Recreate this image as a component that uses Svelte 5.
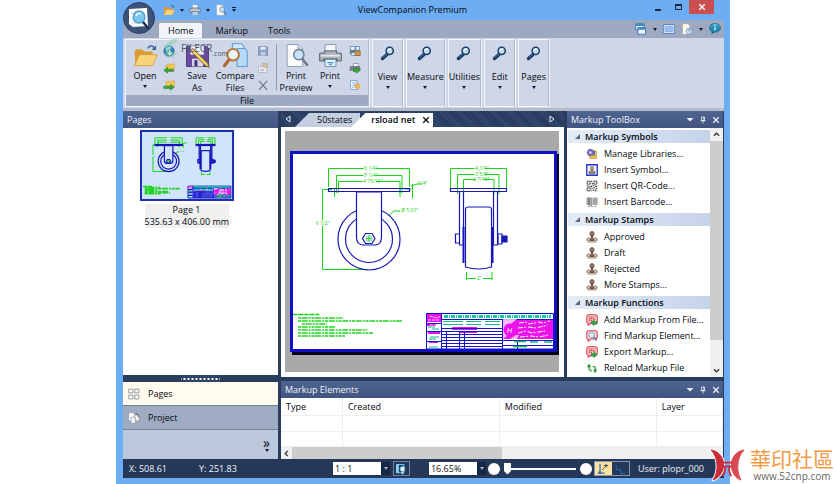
<script lang="ts">
  type Tool = { icon: string; label: string }

  const ribbonTabs = ['Home', 'Markup', 'Tools']
  const collapsedGroups = ['View', 'Measure', 'Utilities', 'Edit', 'Pages']

  const sections: { title: string; items: Tool[] }[] = [
    {
      title: 'Markup Symbols',
      items: [
        { icon: 'library', label: 'Manage Libraries...' },
        { icon: 'symbol', label: 'Insert Symbol...' },
        { icon: 'qr', label: 'Insert QR-Code...' },
        { icon: 'barcode', label: 'Insert Barcode...' },
      ],
    },
    {
      title: 'Markup Stamps',
      items: [
        { icon: 'stamp', label: 'Approved' },
        { icon: 'stamp', label: 'Draft' },
        { icon: 'stamp', label: 'Rejected' },
        { icon: 'stamp', label: 'More Stamps...' },
      ],
    },
    {
      title: 'Markup Functions',
      items: [
        { icon: 'markup-add', label: 'Add Markup From File...' },
        { icon: 'markup-find', label: 'Find Markup Element...' },
        { icon: 'markup-export', label: 'Export Markup...' },
        { icon: 'reload', label: 'Reload Markup File' },
      ],
    },
  ]

  const columns = ['Type', 'Created', 'Modified', 'Layer']

  let activeTab = $state('Home')
  let zoom = $state(0)
</script>

{#snippet icon(name: string)}
  <svg class="icon" viewBox="0 0 16 16" aria-hidden="true">
    {#if name === 'folder'}
      <path d="M1 5.500l1-1.500h4l1 1.500h5.500v3H4L1.500 14z" fill="#d99b35" />
      <path d="M4 7.500h11.500L12.500 14.500H1z" fill="#f9d27c" stroke="#d8992f" stroke-width=".5" />
      <path d="M9.500 3.500c1-2 3-2 4-.5" fill="none" stroke="#45618c" stroke-width="1" />
      <path d="M14.800 1.500v3h-3z" fill="#45618c" />
    {:else if name === 'printer'}
      <path d="M4.500 1h7v6h-7z" fill="#f7f9fc" stroke="#8693a5" stroke-width=".6" />
      <path d="M1 6.500h3V5h8v1.500h3v5H1z" fill="#a9b0ba" stroke="#59616d" stroke-width=".6" />
      <path d="M2 7.500h12v1.200H2z" fill="#e3e7ec" />
      <path d="M3.500 10h9v1.500h-9z" fill="#454c58" />
      <path d="M4.500 10.500h7V15h-7z" fill="#e6f4fc" stroke="#6e8aa5" stroke-width=".6" />
      <path d="M6 12.500h4M7 13.700h2" stroke="#469bd6" stroke-width=".8" />
    {:else if name === 'preview'}
      <path d="M2 1h7l3 3v11H2z" fill="#fbfcfe" stroke="#8b9bb1" stroke-width=".6" />
      <path d="M9 1v3h3" fill="#d8e1ec" stroke="#8b9bb1" stroke-width=".6" />
      <path d="M11.500 10l3.300 4" stroke="#6b7c93" stroke-width="1.600" stroke-linecap="round" />
      <circle cx="9.500" cy="7.500" r="3.300" fill="#c9e4f8" stroke="#66788f" stroke-width=".9" />
    {:else if name === 'save'}
      <path d="M1 2h12.500L15 3.500V15H1z" fill="#6b4ba0" stroke="#4a3477" stroke-width=".6" />
      <path d="M3.500 2h8.500v5.500H3.500z" fill="#eef0fa" />
      <path d="M4.500 10h7v5h-7z" fill="#d9d9ec" />
      <path d="M6 11h2v4H6z" fill="#4a3477" />
      <path d="M5 3.500l9.500 9.500 1 2.500-2.500-1L3.500 5z" fill="#f5d45f" stroke="#6e5523" stroke-width=".6" />
    {:else if name === 'compare'}
      <path d="M6 .5h6l1.500 2V11H6z" fill="#d2e8fa" stroke="#5c9fd8" stroke-width=".7" />
      <path d="M9 3.500h5l1.500 2V15H9z" fill="#b5d9f6" stroke="#5c9fd8" stroke-width=".7" />
      <path d="M4 10.500L1 14.500" stroke="#ad672d" stroke-width="2" stroke-linecap="round" />
      <circle cx="6.500" cy="7.500" r="3.700" fill="#e8f4fd" stroke="#b87739" stroke-width="1.300" />
    {:else if name === 'globe'}
      <circle cx="8" cy="8" r="7" fill="#347cbb" stroke="#195790" stroke-width=".7" />
      <path d="M3 5c2-4 7-4 9-1L8 6 6 9z" fill="#a5d7ed" />
      <path d="M9 6.500v6M6 10l3 3 3-3" fill="none" stroke="#eef8fd" stroke-width="2" />
    {:else if name === 'folder-back' || name === 'folder-next'}
      <path d="M4 4l4-1.500L9 4l6-2v8l-10 2z" fill="#f6c94e" stroke="#cf9b31" stroke-width=".7" />
      {#if name === 'folder-back'}
        <path d="M1 11l5-4v2.500h8v3H6V15z" fill="#36a936" stroke="#167016" stroke-width=".6" />
      {:else}
        <path d="M15 11l-5-4v2.500H1v3h9V15z" fill="#36a936" stroke="#167016" stroke-width=".6" />
      {/if}
    {:else if name === 'disk'}
      <path d="M2 2h11l1 1v11H2z" fill="#8aa0c4" stroke="#6f86ae" stroke-width=".8" />
      <path d="M4.500 2.500h7v4h-7z" fill="#e0e8f4" />
      <path d="M5 9.500h6.500V14H5z" fill="#c4d0e4" />
    {:else if name === 'properties'}
      <path d="M2 6h11v8H2z" fill="#eef1f6" stroke="#98a3b5" stroke-width=".8" />
      <path d="M7 2h7v5H9z" fill="#d8c19d" stroke="#a79372" stroke-width=".6" />
      <path d="M4 9.500h6M4 11.500h6" stroke="#98a3b5" stroke-width=".9" />
    {:else if name === 'delete'}
      <path d="M3 3l10 11M13 3L3 14" stroke="#7c8292" stroke-width="1.600" stroke-linecap="round" />
    {:else if name === 'print-batch'}
      <path d="M2 2h6v5H2zM9 2h5v5H9z" fill="#edf5ff" stroke="#3772b7" stroke-width=".9" />
      <path d="M1 7h9v5H1z" fill="#6e7785" />
      <path d="M7 8h8v6H7z" fill="#d19a3c" stroke="#635037" stroke-width=".8" />
      <path d="M3 10h5v4H3z" fill="#d4edfc" stroke="#3e5b78" stroke-width=".6" />
    {:else if name === 'print-go'}
      <path d="M6 2h6v5H6z" fill="#fff" stroke="#667180" stroke-width=".8" />
      <path d="M2 6h12l1 5H1z" fill="#7b8490" stroke="#474f5a" stroke-width=".7" />
      <path d="M6 9h4V7l5 4-5 4v-2H6z" fill="#3da53a" stroke="#1c6a24" stroke-width=".6" />
    {:else if name === 'page-edit'}
      <path d="M2 2h9v12H2z" fill="#edf4ff" stroke="#5f91c7" stroke-width=".9" />
      <path d="M4 5h5M4 8h4M4 11h3" stroke="#72a7dc" stroke-width=".9" />
      <path d="M8 6v2h3v-3l4 4.500-4 4.500v-3H8z" fill="#f9bd42" stroke="#bc7c1c" stroke-width=".6" />
    {:else if name === 'magnifier'}
      <path d="M7 9.500l-4.500 4" stroke="#183762" stroke-width="3.400" stroke-linecap="round" />
      <path d="M6.500 9.500l-3.500 3" stroke="#578ac0" stroke-width=".8" stroke-linecap="round" />
      <circle cx="9.700" cy="5.800" r="3.600" fill="#bcdcf0" stroke="#1c3c68" stroke-width="1.500" />
      <path d="M8 5.500c.5-1.500 2-2 3-1.500" fill="none" stroke="#fff" stroke-width="1.300" />
    {:else if name === 'windows'}
      <path d="M1 1h11v8H1z" fill="#d8ebfd" stroke="#28659c" />
      <path d="M1 1h11v3H1z" fill="#4089c3" />
      <path d="M4 6h10v9H4z" fill="#eaf4fe" stroke="#28659c" />
      <path d="M4 6h10v3H4z" fill="#4089c3" />
    {:else if name === 'screen'}
      <path d="M1 2h14v12H1z" fill="#e1edff" stroke="#3f6fc2" />
      <path d="M3.500 4.500h9v7h-9z" fill="#9cbdf5" stroke="#6f9be6" stroke-width=".8" />
    {:else if name === 'help-page'}
      <path d="M2 1h7l3 3v11H2z" fill="#fffde9" stroke="#a3a59b" stroke-width=".7" />
      <circle cx="11" cy="11" r="4" fill="#dfe9f7" stroke="#5e7aa5" stroke-width=".9" />
      <path d="M9.700 10c0-2 2.800-1.700 2.500 0-.2.800-1.200.7-1.200 1.800M11 12.800v.8" fill="none" stroke="#355ba0" stroke-width=".9" />
    {:else if name === 'info'}
      <path d="M4 10l-1 5.500 5-4z" fill="#17688f" />
      <ellipse cx="8" cy="6.500" rx="7.300" ry="5.800" fill="#218cb6" stroke="#125a7b" stroke-width=".8" />
      <path d="M3 5c2-4 8-4 10 0" fill="none" stroke="#8cd1e8" />
      <path d="M8 3v1.500M8 5.700v4" stroke="#fff" stroke-width="1.700" />
    {:else if name === 'library'}
      <path d="M7 4h7v10H5V9z" fill="#f1c54c" stroke="#a77a20" stroke-width=".7" />
      <circle cx="6" cy="6" r="4.300" fill="#8170c6" stroke="#433983" stroke-width="1.200" stroke-dasharray="2 1" />
      <circle cx="6" cy="6" r="1.500" fill="#ebe8ff" />
      <path d="M11 3v8" stroke="#4568ae" stroke-width="1.500" />
    {:else if name === 'symbol'}
      <path d="M1 1h14v14H1z" fill="#f3f1ed" stroke="#2435c9" stroke-width="1.800" />
      <circle cx="8" cy="5.500" r="2.200" fill="#c3a894" stroke="#59483c" stroke-width=".7" />
      <path d="M7 7h2v3h3v3H4v-3h3z" fill="#9a8c86" stroke="#514741" stroke-width=".7" />
    {:else if name === 'qr'}
      <path d="M1.500 1.500h4v4h-4zM10.500 1.500h4v4h-4zM1.500 10.500h4v4h-4z" fill="none" stroke="#444" stroke-width="1.200" />
      <path d="M7.500 1v2M8.500 4v2M1 8h3M5 8.500h3M9 7.500h2M12 8.500h3M8 10v2M10 10.500h2M13 11.500h2M9 13.500h2M7.500 14v1M12.500 13v2M14.500 14v1" stroke="#444" stroke-width="1.500" />
    {:else if name === 'barcode'}
      <path d="M1.500 2v10M3.500 2v10M7 2v12M9.500 2v10M14.500 2v10" stroke="#444" stroke-width="1" />
      <path d="M5 2v11M12 2v10" stroke="#777" stroke-width="1.800" />
      <path d="M2 14h3M7.500 14h2M11 14h3" stroke="#888" stroke-width="1" />
    {:else if name === 'stamp'}
      <circle cx="8" cy="3.500" r="3" fill="#8d7062" stroke="#483329" stroke-width=".7" />
      <path d="M6.800 6h2.400l.5 4h-3.400z" fill="#62483b" />
      <path d="M1.500 9.500h4.500l2 1.500 2-1.500h4.500v4h-13z" fill="#dfc6b2" stroke="#644b3d" stroke-width=".8" />
      <path d="M5 12h6" stroke="#31221b" stroke-width="1.800" />
      <path d="M2 15h12" stroke="#b69c8c" />
    {:else if name.startsWith('markup-')}
      <path d="M4 1h8c2 0 3 1 3 3v5c0 2-1 3-3 3H7l-4 3v-3c-2 0-2-1-2-3V4c0-2 1-3 3-3z" fill="#fbdcdd" stroke="#dc3d49" stroke-width="1.400" />
      {#if name === 'markup-find'}
        <path d="M10 9l4 5" stroke="#5974a0" stroke-width="2" />
        <circle cx="7.500" cy="6.500" r="4" fill="#d5e9fb" stroke="#7496bd" />
      {:else}
        <path d="M3.500 4h9M3.500 6.500h9M3.500 9h5" stroke="#d63140" stroke-width="1.500" stroke-dasharray="2 .6" />
        {#if name === 'markup-add'}
          <path d="M6 11.500l5-4v2.500h4v3.500h-4v2z" fill="#39a23d" stroke="#13651d" stroke-width=".6" />
        {:else}
          <path d="M15 11.500l-4.500-4V10H7v3.500h3.500v2z" fill="#39a23d" stroke="#13651d" stroke-width=".6" />
        {/if}
      {/if}
    {:else if name === 'reload'}
      <path d="M8 12C4.500 12 3.700 9 4 6" fill="none" stroke="#2f9637" stroke-width="1.600" />
      <path d="M4.200 2L1 7h6z" fill="#2f9637" />
      <path d="M9 6c3.200-.5 4 1.500 3.500 5" fill="none" stroke="#2f9637" stroke-width="1.600" />
      <path d="M12 15l-2.500-5H15z" fill="#2f9637" />
    {:else if name === 'grid'}
      <path d="M1 1.500h5.500v5H1zM9 1.500h5.500v5H9zM1 9.500h5.500v5H1zM9 9.500h5.500v5H9z" fill="#fff" stroke="#747986" stroke-width="1" />
    {:else if name === 'project'}
      <path d="M1 1h6l2 2v9H1z" fill="#fff" stroke="#8290a4" stroke-width=".8" />
      <path d="M8 4h5l2 2v6H8z" fill="#f5f2dc" stroke="#8290a4" stroke-width=".8" />
      <path d="M4 7h6v8H4z" fill="#eef4fb" stroke="#8290a4" stroke-width=".8" />
      <path d="M10 3c3-1 4 1 4 4" fill="none" stroke="#3b4a61" />
    {:else if name === 'view-page'}
      <path d="M2 2h10v11H2z" fill="#1f3f69" stroke="#7ac5ec" stroke-width="1.300" />
      <path d="M2 2h3v11H2z" fill="#9bdaf5" />
      <path d="M10 10v5" stroke="#cce9f8" stroke-width="2" />
      <circle cx="10" cy="8" r="3.200" fill="#e8f7ff" stroke="#6cb2dc" />
    {:else if name === 'snap'}
      <path d="M4 1v10M1 13.500h9" stroke="#2c5ea5" stroke-width="1.500" />
      <path d="M2 11l2 4 2-4z" fill="#2c5ea5" />
      <path d="M7 9l3-3M9 3.500h6M12 1v5" stroke="#333d52" stroke-width="1.300" />
    {:else if name === 'ortho'}
      <path d="M3 3v6h6v5h6" fill="none" stroke="#2767af" stroke-width="1.600" />
    {:else if name === 'pin'}
      <path d="M5 2h6v7H5zM9.500 2v7M3 9.500h10M8 9.500V15" fill="none" stroke="#fff" stroke-width="1.400" />
    {:else if name === 'close'}
      <path d="M2.500 2.500l11 11M13.500 2.500l-11 11" stroke="currentColor" stroke-width="2.500" />
    {:else if name === 'down'}
      <path d="M1 4h14L8 11z" fill="currentColor" />
    {/if}
  </svg>
{/snippet}

{#snippet drawing()}
  <g fill="none" stroke="#16d716" stroke-width="1">
    <path d="M38.500 36V17.500h35M86 17.500h33.500V36M46.500 42V24.500h27M85 24.500h27V42M48.500 42V30.500h24M86 30.500h24V42" />
    <path d="M44.500 38v8M110 38v8M114.500 38h7M122.500 33v14M121 35l6-2h5" />
    <path d="M42 38.500h-9.500v31M32.500 75v43.500H78" />
    <path d="M98 65l6-5h6" />
    <path d="M160.500 37V17.500h24M195 17.500h21.500V37M167.500 43V23.500h17M195 23.500h14V43M173.500 43V28.500h12M193 28.500h11V43" />
    <path d="M176.500 121v8M202 121v8M177 127.500h9M193 127.500h9" />
  </g>
  <g class="dims">
    <text x="74" y="19">6 1/4"</text>
    <text x="74" y="26">5 1/4"</text>
    <text x="73" y="32">4 15/16"</text>
    <text x="128" y="34">1/4"</text>
    <text x="26" y="74">6 1/2"</text>
    <text x="111" y="61">Ø 5.00"</text>
    <text x="185" y="19">4 1/4"</text>
    <text x="185" y="25">3 5/8"</text>
    <text x="183" y="30">2 7/16"</text>
    <text x="187" y="129">2"</text>
  </g>
  <g fill="none" stroke="#1717b8" stroke-width="1.200">
    <path d="M38.500 37.500h81v3h-81z" />
    <circle cx="79" cy="88" r="31" />
    <circle cx="79" cy="88" r="23.500" />
    <path d="M66.500 41v45q0 8 7 8h11q7 0 7-8V41z" fill="var(--paper)" />
    <path d="M85 87.500l-3 5h-6.500l-3-5 3-5H82z" />
    <circle cx="79" cy="87.500" r="3" stroke="#16a7a7" stroke-width=".6" />
    <path d="M76.500 87.500h5M79 85v5" stroke="#16d716" />
    <path d="M160.500 37.500h56v3h-56z" />
    <path d="M169.500 41v53h4V41M203.500 41v53h4V41" />
    <path d="M173.500 76v36M202.500 76v36" stroke-width="2" />
    <path d="M175.500 116V58q0-2 3-2h20q3 0 3 2v58q-13 4-26 0z" fill="var(--paper)" />
    <path d="M169 83h-3.500v9h4M208 83h4v10h-4z" />
    <path d="M212 85h5v6h-5z" fill="#1717b8" />
  </g>
  <g stroke="#21d321" stroke-width="1.600">
    <path d="M3 163.500h27" stroke-dasharray="4 .5 6 .7" />
    <path d="M8 167h45M8 170h104M12 173h25M8 176h38M8 179h69M8 182h75M8 185h47" stroke-dasharray="3 .7 6 1 2 .8" />
  </g>
  <path d="M136.500 162.500h127v35.500h-127z" fill="var(--paper)" stroke="#1111d4" />
  <path d="M137 163h14v8h-14zM137 172h9v3h-9zM138 180h12v3h-12zM139 190h9v2h-9zM213 168h50v20h-50zM162 176h25v3h-25zM170 180h17v2h-17z" fill="#ed12ec" />
  <path d="M140 165l7 2 4-2M138 169h11M140 174h9" fill="none" stroke="var(--paper)" stroke-width=".8" stroke-dasharray="3 1" />
  <path d="M138 176h7M142 178h7M140 186h9M139 188h7M139 196h9" stroke="#16b98a" stroke-width="1" />
  <path d="M154 165.500h107" stroke="#16c7a6" stroke-width="3" stroke-dasharray="4 1 1 1" />
  <path d="M153 170.500h20M176 170.500h15M195 170.500h15M153 173.500h20M176 173.500h15M195 173.500h15" stroke="#12b98a" stroke-width="1" />
  <path d="M151.500 163v35M212.500 168v30M152 168.500h111M152 177.500h60M152 180.500h60M152 183.500h60M152 186.500h60M152 189.500h60M152 192.500h60M152 195.500h60M156.500 180v18M169.500 180v18M174.500 180v18M137 172.500h14M137 180.500h14M137 190.500h14M213 189.500h50M213 194.500h50M227.500 189v9" fill="none" stroke="#1414d0" stroke-width="1" />
  <path d="M224 190.500h12M240 191h8M254 191h8M223 195.500h14" stroke="#16b95a" stroke-width="1.500" />
  <path d="M213 168h14l-6 5h-4q-4 6 0 12l-4 3zM220 188l6-4h3l-2 4z" fill="#fff" opacity=".7" />
  <circle cx="220" cy="179" r="6.500" fill="#ed12ec" />
  <text x="217" y="182" class="mark">H</text>
  <path d="M229 172l7-1 3 2 10-2 4 1 7-2M228 177l10-1 8 1 12-3M228 182l8-2 6 2 13-2M230 186l11-1 8 1 10-2" fill="none" stroke="var(--paper)" stroke-width="1" stroke-dasharray="5 1 2 2" />
{/snippet}

{#snippet panelHeader(title: string, tools: boolean)}
  <header class="panel-header">
    <h2>{title}</h2>
    {#if tools}
      <button aria-label="{title} menu">{@render icon('down')}</button>
      <button aria-label="Pin {title}">{@render icon('pin')}</button>
      <button aria-label="Close {title}">{@render icon('close')}</button>
    {/if}
  </header>
{/snippet}

{#snippet smallTools(names: string[])}
  <div class="small-tools">
    {#each names as name}
      <button aria-label={name}>{@render icon(name)}</button>
    {/each}
  </div>
{/snippet}

<div class="window">
  <div class="titlebar">
    <button class="orb" aria-label="Application menu">
      <svg viewBox="0 0 32 32" aria-hidden="true">
        <circle cx="16" cy="16" r="15.500" fill="#3d5277" stroke="#2a3f63" />
        <path d="M6 7l18-1 1 18-15 1-4-3z" fill="#fff" />
        <path d="M8 11h12M8 21h12" stroke="#bcd2e8" stroke-dasharray="2 1" />
        <path d="M20 20l5 6" stroke="#16304f" stroke-width="2.500" stroke-linecap="round" />
        <circle cx="16" cy="15" r="6" fill="#7cc6ee" stroke="#4c9fce" stroke-width="1.300" />
        <path d="M13 14c1-3 4-3 5-2" fill="none" stroke="#fff" stroke-width="1.500" />
      </svg>
    </button>
    <div class="quick">
      <button aria-label="Open file">{@render icon('folder')}</button>
      <i class="arrow"></i>
      <button aria-label="Print file">{@render icon('printer')}</button>
      <i class="arrow"></i>
      <button aria-label="Preview">{@render icon('preview')}</button>
      <i class="arrow lined"></i>
    </div>
    <h1>ViewCompanion Premium</h1>
    <div class="controls">
      <button class="min" aria-label="Minimize"><i></i></button>
      <button class="max" aria-label="Maximize"><i></i></button>
      <button class="close" aria-label="Close">{@render icon('close')}</button>
    </div>
  </div>

  <nav class="tabs">
    {#each ribbonTabs as tab}
      <button class:active={activeTab === tab} onclick={() => (activeTab = tab)}>{tab}</button>
    {/each}
    <div class="tab-tools">
      <button aria-label="Windows">{@render icon('windows')}</button>
      <i class="arrow"></i>
      <button aria-label="Full screen">{@render icon('screen')}</button>
      <button aria-label="Help">{@render icon('help-page')}</button>
      <i class="arrow"></i>
      <button aria-label="About">{@render icon('info')}</button>
    </div>
  </nav>

  <div class="ribbon">
    <section class="group file">
      <div class="group-body">
        <button class="big open">{@render icon('folder')}<span>Open</span><i class="arrow"></i></button>
        {@render smallTools(['globe', 'folder-back', 'folder-next'])}
        <button class="big save">{@render icon('save')}<span>Save</span><span>As</span></button>
        <button class="big compare">{@render icon('compare')}<span>Compare</span><span>Files</span></button>
        {@render smallTools(['disk', 'properties', 'delete'])}
        <hr />
        <button class="big preview">{@render icon('preview')}<span>Print</span><span>Preview</span></button>
        <button class="big print">{@render icon('printer')}<span>Print</span><i class="arrow"></i></button>
        {@render smallTools(['print-batch', 'print-go', 'page-edit'])}
      </div>
      <h2>File</h2>
      <div class="filecr">
        <svg viewBox="0 0 24 26" aria-hidden="true">
          <path d="M2 10L14 1h8l-6 6h-4v5l-5 4zM3 15l8-3v5l9 1-6 6H5z" fill="#6fd09a" />
        </svg>
        <span>FILECR</span><small>.com</small>
      </div>
    </section>
    {#each collapsedGroups as group}
      <section class="group">
        <button class="big collapsed">{@render icon('magnifier')}<span>{group}</span><i class="arrow"></i></button>
      </section>
    {/each}
  </div>

  <main>
    <aside class="pages">
      {@render panelHeader('Pages', false)}
      <div class="page-list">
        <figure>
          <svg class="thumb" viewBox="0 0 267 201" preserveAspectRatio="none" role="img" aria-label="Page 1 preview">
            {@render drawing()}
          </svg>
          <figcaption>Page 1<br />535.63 x 406.00 mm</figcaption>
        </figure>
      </div>
      <div class="splitter"></div>
      <button class="side-tab current">{@render icon('grid')}Pages</button>
      <button class="side-tab">{@render icon('project')}Project</button>
      <div class="side-more"><button aria-label="More panels">»<i class="arrow"></i></button></div>
    </aside>

    <section class="document">
      <div class="doc-tabs">
        <button class="scroll left" aria-label="Previous tab"><svg viewBox="0 0 6 8"><path d="M5 1v6L1 4z" /></svg></button>
        <button class="doc-tab">50states</button>
        <button class="doc-tab active">rsload net {@render icon('close')}</button>
        <button class="scroll right" aria-label="Next tab"><svg viewBox="0 0 6 8"><path d="M1 1v6l4-3z" /></svg></button>
      </div>
      <div class="canvas">
        <svg class="sheet" viewBox="3 3 261 195" preserveAspectRatio="none" role="img" aria-label="Caster wheel drawing">
          {@render drawing()}
        </svg>
      </div>
    </section>

    <aside class="toolbox">
      {@render panelHeader('Markup ToolBox', true)}
      <div class="toolbox-body">
        <div class="toolbox-list">
          {#each sections as section}
            <h3><svg viewBox="0 0 6 6" aria-hidden="true"><path d="M6 0v6H0z" /></svg>{section.title}</h3>
            <ul>
              {#each section.items as item}
                <li><button>{@render icon(item.icon)}{item.label}</button></li>
              {/each}
            </ul>
          {/each}
        </div>
        <div class="vscroll">
          <svg viewBox="0 0 8 8"><path d="M1 5.500l3-3 3 3" /></svg>
          <div class="thumb-bar"></div>
          <svg viewBox="0 0 8 8"><path d="M1 2.500l3 3 3-3" /></svg>
        </div>
      </div>
    </aside>

    <section class="elements">
      {@render panelHeader('Markup Elements', true)}
      <table>
        <thead>
          <tr>{#each columns as column}<th>{column}</th>{/each}</tr>
        </thead>
        <tbody>
          {#each [0, 1] as row (row)}
            <tr>{#each columns as column (column)}<td></td>{/each}</tr>
          {/each}
        </tbody>
      </table>
      <div class="hscroll">
        <svg viewBox="0 0 8 8"><path d="M5.500 1l-3 3 3 3" /></svg>
        <div class="track"><div class="thumb-bar"></div></div>
        <svg viewBox="0 0 8 8"><path d="M2.500 1l3 3-3 3" /></svg>
      </div>
    </section>
  </main>

  <footer>
    <span class="coord">X: 508.61</span>
    <span class="coord">Y: 251.83</span>
    <div class="combo">
      <select aria-label="Scale"><option>1 : 1</option></select>
      <i class="arrow"></i>
    </div>
    <button class="status-button" aria-label="View page">{@render icon('view-page')}</button>
    <div class="combo zoom">
      <select aria-label="Zoom"><option>16.65%</option></select>
      <i class="arrow"></i>
    </div>
    <button class="round" aria-label="Zoom out"></button>
    <input type="range" min="0" max="100" bind:value={zoom} aria-label="Zoom level" />
    <button class="round" aria-label="Zoom in"></button>
    <div class="modes">
      <button class="on" aria-label="Snap">{@render icon('snap')}</button>
      <button aria-label="Ortho">{@render icon('ortho')}</button>
    </div>
    <span class="user">User: plopr_000</span>
  </footer>
</div>

<div class="site-mark">
  <svg viewBox="0 0 36 34" aria-hidden="true">
    <g stroke-linejoin="round">
      <g fill="#fff" stroke="#fff" stroke-width="3">
        <path d="M1 1c8 1 13 8 13 15 0 8-5 14-11 16 6-8 6-23-2-31z" />
        <path d="M35 1c-8 1-13 8-13 15 0 8 4 14 10 16-5-8-5-23 3-31z" />
      </g>
      <path d="M1 1c8 1 13 8 13 15 0 8-5 14-11 16 6-8 6-23-2-31z" fill="#c92c38" stroke="#c92c38" />
      <path d="M35 1c-8 1-13 8-13 15 0 8 4 14 10 16-5-8-5-23 3-31z" fill="#d94a50" stroke="#d94a50" />
      <path d="M13 14h10M12 18h11M15 18c1 4 0 7-2 10M20 18c-1 4 0 7 2 10" fill="none" stroke="#c92c38" stroke-width="1.800" />
    </g>
  </svg>
  <div>
    <strong>華印社區</strong>
    <span>www.52cnp.com</span>
  </div>
</div>

<style>
  :global(body) {
    margin: 0;
    background: #fff;
  }

  .window,
  .site-mark {
    font-family: 'Open Sans', 'Noto Sans', sans-serif;
  }

  .window {
    position: relative;
    display: flex;
    flex-direction: column;
    box-sizing: border-box;
    min-height: 100vh;
    margin: 0 106px 0 116px;
    padding: 0 6px 6px 7px;
    font-size: 9px;
    line-height: 12px;
    color: #04070f;
    background: #6cadf4;
  }

  button {
    display: flex;
    align-items: center;
    justify-content: center;
    padding: 0;
    font: inherit;
    color: inherit;
    white-space: nowrap;
    background: none;
    border: 0;
  }

  h1,
  h2,
  h3,
  ul,
  figure {
    margin: 0;
    padding: 0;
    font: inherit;
    list-style: none;
  }

  .icon {
    display: block;
    flex: none;
    width: 12px;
    height: 12px;
  }

  .arrow {
    display: block;
    flex: none;
    width: 0;
    border: 2px solid transparent;
    border-top: 3px solid #151b2c;
    border-bottom: 0;
  }

  .titlebar {
    display: grid;
    grid-template-columns: 1fr auto 1fr;
    height: 20px;
    padding-right: 10px;
  }

  .orb {
    position: absolute;
    top: 2px;
    left: 7px;
    z-index: 1;
  }

  .orb svg {
    width: 32px;
    height: 32px;
  }

  .quick {
    display: flex;
    gap: 5px;
    align-items: center;
    padding-left: 40px;
  }

  .lined {
    position: relative;
  }

  .lined::before {
    position: absolute;
    top: -5px;
    left: -2px;
    width: 4px;
    height: 1px;
    content: '';
    background: #151b2c;
  }

  h1 {
    align-self: center;
    padding-right: 12px;
    font-size: 9px;
    font-weight: 500;
  }

  .controls {
    display: flex;
    justify-content: flex-end;
    height: 14px;
  }

  .controls button {
    width: 21px;
  }

  .controls .close {
    width: 25px;
    color: #fff;
    background: #c9504f;
  }

  .close .icon {
    width: 8px;
    height: 8px;
  }

  .min i {
    width: 6px;
    height: 2px;
    margin-top: 5px;
    background: #1a2740;
  }

  .max i {
    width: 5px;
    height: 3px;
    border: 1px solid #1a2740;
    border-top-width: 2px;
  }

  .tabs {
    display: flex;
    align-items: flex-end;
    height: 18px;
    padding-left: 36px;
    background: #9da9c1;
    border-radius: 3px 3px 0 0;
  }

  .tabs > button {
    height: 15px;
    padding: 0 7px;
    margin-right: 6px;
  }

  .tabs > .active {
    padding: 0 9px;
    background: #f2f4f9;
    border-radius: 2px 2px 0 0;
  }

  .tab-tools {
    display: flex;
    gap: 6px;
    align-items: center;
    height: 100%;
    margin-left: auto;
    padding-right: 3px;
  }

  .ribbon {
    display: flex;
    gap: 3px;
    height: 68px;
    padding: 1px 2px;
    background: #cfd6e8;
    border-bottom: 3px solid #b4bccc;
  }

  .group {
    position: relative;
    display: flex;
    flex-direction: column;
    box-sizing: border-box;
    border: 1px solid #f4f6fb;
    border-right-color: #aeb7c9;
    box-shadow: 1px 0 #f4f6fb;
  }

  .group h2 {
    height: 11px;
    line-height: 11px;
    text-align: center;
    background: #9eaac3;
  }

  .group-body {
    display: flex;
    flex: 1;
    padding: 3px 3px 0 2px;
  }

  .group-body hr {
    width: 1px;
    height: 46px;
    margin: 1px 0 0 2px;
    background: #8f9ab1;
    border: 0;
  }

  .big {
    flex-direction: column;
    justify-content: flex-start;
  }

  .big .icon {
    width: 25px;
    height: 25px;
    margin-bottom: 2px;
  }

  .big .arrow {
    margin-top: 3px;
  }

  .big.open,
  .big.compare {
    width: 34px;
  }

  .big.save {
    width: 42px;
  }

  .big.preview {
    width: 38px;
  }

  .big.print {
    width: 30px;
  }

  .collapsed {
    min-width: 29px;
    padding: 5px 0 0;
  }

  .collapsed .icon {
    width: 16px;
    height: 16px;
    margin-bottom: 10px;
  }

  .small-tools {
    display: flex;
    flex-direction: column;
    gap: 5px;
    align-items: center;
    width: 14px;
    padding-top: 2px;
  }

  .compare + .small-tools {
    width: 22px;
  }

  .print + .small-tools {
    width: 20px;
  }

  .filecr {
    position: absolute;
    top: -4px;
    left: 36px;
    display: flex;
    align-items: center;
    font-size: 10px;
    font-weight: 500;
    color: #4e596d;
    pointer-events: none;
  }

  .filecr svg {
    width: 19px;
    height: 23px;
    opacity: 0.4;
  }

  .filecr small {
    margin-top: 12px;
    font-size: 7px;
  }

  main {
    display: grid;
    flex: 1;
    grid-template-rows: minmax(262px, 1fr) 78px;
    grid-template-columns: 155px minmax(0, 1fr) 156px;
    gap: 4px 3px;
    padding-right: 1px;
    background: #2a3c5d;
  }

  .panel-header {
    display: flex;
    gap: 3px;
    align-items: center;
    height: 17px;
    padding: 0 2px 0 4px;
    color: #eef2f9;
    background: linear-gradient(#4f6490, #405580);
  }

  .panel-header h2 {
    flex: 1;
  }

  .panel-header .icon {
    width: 8px;
    height: 8px;
    margin: 0 1px;
  }

  .pages {
    display: flex;
    flex-direction: column;
    grid-row: 1 / 3;
  }

  .page-list {
    display: flex;
    flex: 1;
    justify-content: center;
    padding: 2px 28px 0 0;
    background: #fff;
  }

  .thumb {
    --paper: #d0e4fa;

    display: block;
    box-sizing: border-box;
    width: 94px;
    height: 71px;
    background: #d0e4fa;
    border: 2px solid #1b2fb4;
  }

  .thumb :global(path),
  .thumb :global(circle) {
    vector-effect: non-scaling-stroke;
  }

  figcaption {
    width: 84px;
    margin: 3px auto 0;
    text-align: center;
    white-space: nowrap;
    background: #f0f0f0;
  }

  .dims {
    font: 5px 'Open Sans', sans-serif;
    fill: #12cf12;
  }

  .mark {
    font: italic 7px 'Liberation Sans', sans-serif;
    fill: #fff;
  }

  .splitter {
    height: 7px;
    padding: 0 58px;
    background: radial-gradient(circle, #fff 1px, transparent 1px) center / 4px 4px repeat-x content-box #2e4267;
  }

  .side-tab {
    gap: 8px;
    justify-content: flex-start;
    height: 24px;
    padding-left: 5px;
    background: #9eabc2;
    border-bottom: 1px solid #74829b;
  }

  .side-tab.current {
    background: #fffbee;
  }

  .side-more {
    display: flex;
    align-items: center;
    justify-content: flex-end;
    height: 29px;
    padding-right: 8px;
    background: #bbc7db;
  }

  .side-more button {
    flex-direction: column;
    font-size: 14px;
  }

  .document {
    display: flex;
    flex-direction: column;
    min-width: 0;
  }

  .doc-tabs {
    display: flex;
    align-items: flex-end;
    height: 16px;
    padding: 0 4px;
    background: repeating-linear-gradient(45deg, #24365a 0 1px, #344a70 1px 2px);
  }

  .scroll {
    align-self: center;
  }

  .scroll svg {
    width: 6px;
    height: 8px;
    fill: none;
    stroke: #e5ebf5;
  }

  .scroll.right {
    margin-right: 5px;
    margin-left: auto;
  }

  .doc-tab {
    box-sizing: border-box;
    height: 14px;
    padding: 0 8px 0 22px;
    margin-left: 4px;
    background: #c4cfe1;
    clip-path: polygon(0 100%, 14px 0, 100% 0, 100% 100%);
  }

  .doc-tab.active {
    gap: 7px;
    padding: 0 3px 0 20px;
    margin-left: -9px;
    font-weight: 600;
    background: #fff;
  }

  .doc-tab .icon {
    width: 8px;
    height: 8px;
  }

  .canvas {
    display: flex;
    flex: 1;
    box-sizing: border-box;
    padding: 20px 2px 20px 5px;
    background: #a9a9a9;
    border: solid #fff;
    border-width: 4px 5px 5px 4px;
    contain: size;
  }

  .sheet {
    --paper: #fff;

    flex: 1;
    box-sizing: border-box;
    width: 0;
    background: #fff;
    border: 3px solid #0f0fc8;
    box-shadow: 2px 3px #05051a;
  }

  .toolbox {
    display: flex;
    flex-direction: column;
  }

  .toolbox-body {
    display: flex;
    flex: 1;
    padding-left: 1px;
    background: #fff;
    contain: size;
  }

  .toolbox-list {
    flex: 1;
    padding-top: 2px;
    overflow: hidden;
  }

  h3 {
    display: flex;
    gap: 5px;
    align-items: center;
    height: 13px;
    padding-left: 7px;
    font-weight: 600;
    background: linear-gradient(90deg, #e4ecf7, #c5d3e9);
  }

  h3 svg {
    width: 5px;
    height: 5px;
    fill: #586783;
  }

  .toolbox ul {
    padding: 3px 0;
  }

  .toolbox li button {
    gap: 6px;
    height: 16px;
    padding-left: 18px;
  }

  .vscroll {
    display: flex;
    flex-direction: column;
    align-items: center;
    width: 13px;
    background: #f0f0f0;
  }

  .vscroll .thumb-bar {
    width: 100%;
    height: 80%;
    margin-bottom: auto;
    background: #cdcdcd;
  }

  .vscroll svg,
  .hscroll svg {
    width: 7px;
    height: 7px;
    padding: 3px 2px;
    fill: none;
    stroke: #333;
    stroke-width: 1.5px;
  }

  .elements {
    display: flex;
    flex-direction: column;
    grid-column: 2 / 4;
    min-width: 0;
  }

  table {
    flex: 1;
    width: 100%;
    table-layout: fixed;
    border-spacing: 0;
    background: #fff;
  }

  th,
  td {
    box-sizing: border-box;
    height: 14px;
    padding: 0 5px;
    font-weight: 400;
    text-align: left;
    border: solid #eceef2;
    border-width: 0 1px 1px 0;
  }

  th {
    height: 18px;
  }

  th:nth-child(1) {
    width: 14%;
  }

  th:nth-child(2),
  th:nth-child(3) {
    width: 35.5%;
  }

  .hscroll {
    display: flex;
    align-items: center;
    height: 12px;
    background: #f0f0f0;
  }

  .track {
    flex: 1;
    height: 100%;
  }

  .hscroll .thumb-bar {
    width: 50%;
    height: 100%;
    background: #cdcdcd;
  }

  footer {
    display: flex;
    align-items: center;
    height: 19px;
    padding: 0 20px 0 6px;
    color: #f0f3f9;
    background: #253858;
  }

  .coord {
    width: 70px;
  }

  .coord + .coord {
    flex: 1;
  }

  .combo {
    position: relative;
    display: flex;
    align-items: center;
    width: 57px;
    height: 13px;
    margin-right: 3px;
    background: #fff;
  }

  .combo.zoom {
    margin: 0 2px 0 19px;
  }

  .combo select {
    width: 100%;
    height: 100%;
    padding: 0 2px;
    font: inherit;
    color: #111;
    background: linear-gradient(90deg, transparent calc(100% - 9px), #172844 0) #fff;
    border: 0;
    appearance: none;
  }

  .combo .arrow {
    position: absolute;
    right: 2px;
    border-top-color: #aeb9cc;
    pointer-events: none;
  }

  .status-button {
    box-sizing: border-box;
    width: 17px;
    height: 15px;
    border: 1px solid #6f819f;
  }

  .round {
    flex: none;
    width: 12px;
    height: 12px;
    background: #fff;
    border-radius: 50%;
  }

  input[type='range'] {
    width: 72px;
    height: 13px;
    margin: 0 4px;
    appearance: none;
    background: linear-gradient(#fff, #fff) center / 100% 2px no-repeat;
  }

  input[type='range']::-webkit-slider-thumb {
    width: 7px;
    height: 12px;
    appearance: none;
    background: #fff;
    clip-path: polygon(0 0, 100% 0, 100% 70%, 50% 100%, 0 70%);
  }

  .modes {
    display: flex;
    margin: 0 8px 0 2px;
    border: 1px solid #8796b0;
  }

  .modes button {
    width: 17px;
    height: 13px;
  }

  .modes .on {
    background: #fde3a0;
  }

  .site-mark {
    position: absolute;
    right: 2px;
    bottom: 1px;
    display: flex;
    gap: 4px;
    align-items: center;
    color: #666;
    text-shadow: 0 0 2px #fff;
  }

  .site-mark svg {
    width: 37px;
    height: 33px;
    overflow: visible;
  }

  .site-mark div {
    display: flex;
    flex-direction: column;
    align-items: center;
  }

  .site-mark strong {
    font: 21px/22px 'Noto Sans CJK TC', sans-serif;
    color: #f29a45;
  }

  .site-mark span {
    font-size: 10px;
    line-height: 14px;
  }
</style>
